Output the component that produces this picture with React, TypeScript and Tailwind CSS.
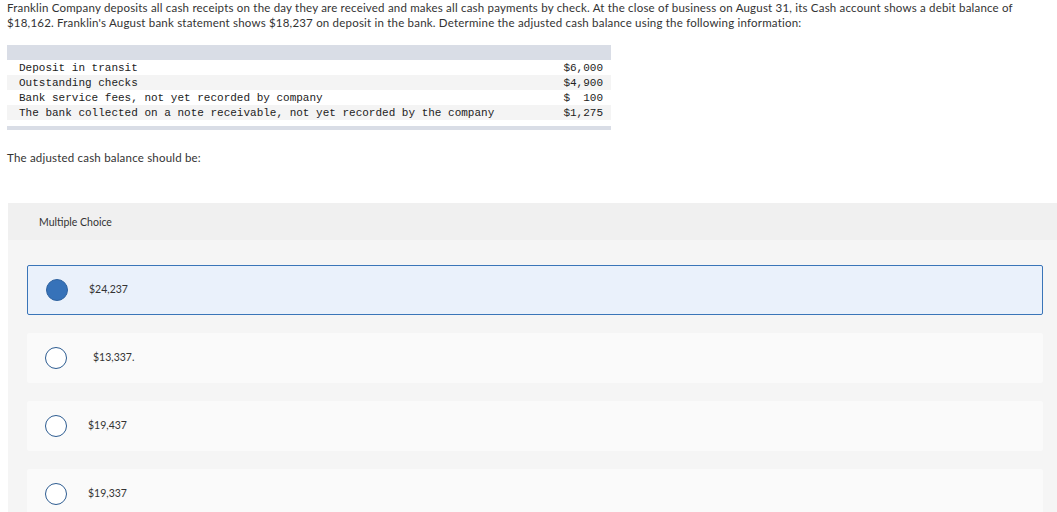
const rows = [
  { label: "Deposit in transit", amount: "$6,000" },
  { label: "Outstanding checks", amount: "$4,900" },
  { label: "Bank service fees, not yet recorded by company", amount: "$  100" },
  { label: "The bank collected on a note receivable, not yet recorded by the company", amount: "$1,275" },
];

const choices = ["$24,237", "$13,337.", "$19,437", "$19,337"];

function Radio({ checked }: { checked: boolean }) {
  return checked ? (
    <span className="block h-[22px] w-[22px] rounded-full border border-[#2f63a0] bg-[#3672b9]" />
  ) : (
    <span className="block h-[22px] w-[22px] rounded-full border-[1.5px] border-[#2d5c91] bg-white" />
  );
}

export default function App() {
  return (
    <div className="min-h-[512px] bg-white font-['Lato',sans-serif] text-[#333]">
      <p className="whitespace-nowrap pl-[7px] text-[11.5px] leading-[15px] tracking-[0.2px]">
        Franklin Company deposits all cash receipts on the day they are received and makes all cash payments by check. At the close of
        business on August 31, its Cash account shows a debit balance of
        <br />
        $18,162. Franklin's August bank statement shows $18,237 on deposit in the bank. Determine the adjusted cash balance using the
        following information:
      </p>

      <div className="ml-[7px] mt-[15px] w-[604px] font-['Liberation_Mono',monospace] text-[11px] text-[#222]">
        <div className="h-[15px] bg-[#d9dde6]" />
        {rows.map((r, i) => (
          <div
            key={r.label}
            className={`flex h-[15px] items-center justify-between pl-[12px] pr-[8px] pt-[1px] ${i % 2 === 1 ? "bg-[#f4f4f4]" : "bg-white"}`}
          >
            <span className="whitespace-pre">{r.label}</span>
            <span className="whitespace-pre">{r.amount}</span>
          </div>
        ))}
        <div className="mt-[6px] h-[4px] bg-[#d9dde6]" />
      </div>

      <p className="mt-[20px] pl-[7px] text-[11.5px] leading-[15px] tracking-[0.2px]">The adjusted cash balance should be:</p>

      <div className="ml-[8px] mt-[38px] bg-[#f5f5f5] pb-4">
        <div className="flex h-[37px] items-center bg-[#f0f0f0] pl-[31px] pt-[2px] text-[10.5px] text-[#333]">Multiple Choice</div>
        <div className="flex flex-col gap-[18px] pl-[19px] pr-[14px] pt-[25px]">
          {choices.map((c, i) => (
            <div
              key={c}
              className={`flex h-[50px] items-center rounded-[2px] pl-[18px] ${
                i === 0 ? "border border-[#3a75b8] bg-[#eaf1fb]" : "bg-[#fafafa]"
              }`}
            >
              <Radio checked={i === 0} />
              <span className={`text-[10.5px] text-[#333] ${i === 1 ? "ml-[26px]" : "ml-[21px]"}`}>{c}</span>
            </div>
          ))}
        </div>
      </div>
    </div>
  );
}
